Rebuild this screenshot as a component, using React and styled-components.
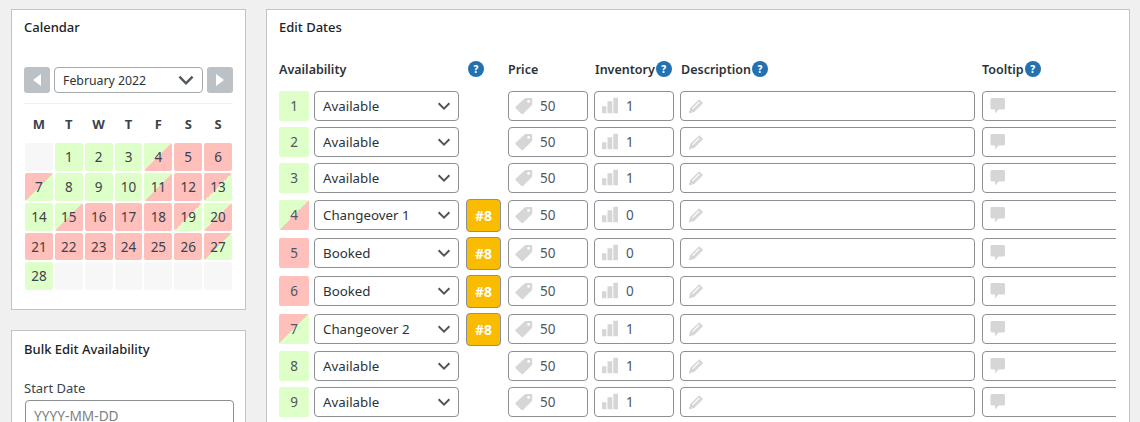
import React from 'react';
import styled, { createGlobalStyle, css } from 'styled-components';

const GREEN = '#dfffc9';
const RED = '#ffc0bc';
const FONT = '"Noto Sans", "Open Sans", sans-serif';

const fills = {
  free: css`background: ${GREEN};`,
  booked: css`background: ${RED};`,
  in: css`background: linear-gradient(to bottom right, ${GREEN} 50%, ${RED} 50%);`,
  out: css`background: linear-gradient(to bottom right, ${RED} 50%, ${GREEN} 50%);`,
  empty: css`background: #f7f7f7;`,
};

const chevron = (size) =>
  `url("data:image/svg+xml,%3Csvg xmlns='http://www.w3.org/2000/svg' viewBox='0 0 20 20' width='${size}' height='${size}'%3E%3Cpath d='M4 7l6 6 6-6' fill='none' stroke='%2350575e' stroke-width='2.2'/%3E%3C/svg%3E")`;

const GlobalStyle = createGlobalStyle`
  html, body {
    margin: 0;
    height: 422px;
    overflow: hidden;
    background: #f0f0f1;
    font-family: ${FONT};
    color: #2c3338;
  }
`;

const Page = styled.div`
  display: grid;
  grid-template-columns: 235px 864px;
  column-gap: 20px;
  padding: 9px 0 0 11px;
  height: 413px;
  overflow: hidden;
`;

const Sidebar = styled.div`
  display: flex;
  flex-direction: column;
  gap: 20px;
`;

const Card = styled.section`
  background: #fff;
  border: 1px solid #c3c4c7;
  box-sizing: border-box;
  padding: ${(p) => p.$padding || '0 12px'};
  height: ${(p) => p.$height || 'auto'};
`;

const CardTitle = styled.h2`
  margin: 0;
  font-size: 13px;
  line-height: 18px;
  font-weight: 500;
  color: #1d2327;
`;

const MonthBar = styled.div`
  display: grid;
  grid-template-columns: 26px 149px 26px;
  column-gap: 4px;
  margin-top: 31px;
  padding-bottom: 10px;
  border-bottom: 1px solid #f0f0f1;
`;

const NavButton = styled.button`
  height: 26px;
  padding: 0;
  border: 0;
  border-radius: 3px;
  background: #bcc1c5;
  display: flex;
  align-items: center;
  justify-content: center;
`;

const NavArrow = styled.span`
  width: 0;
  height: 0;
  border-top: 6px solid transparent;
  border-bottom: 6px solid transparent;
  ${(p) => (p.$left ? 'border-right: 8px solid #fff;' : 'border-left: 8px solid #fff;')}
`;

const Select = styled.select`
  appearance: none;
  box-sizing: border-box;
  width: ${(p) => p.$width || '100%'};
  height: ${(p) => p.$height || '30px'};
  padding: 0 24px 0 8px;
  border: 1px solid ${(p) => p.$border || '#8c8f94'};
  border-radius: 4px;
  background: #fff ${(p) => chevron(p.$chevron || 18)} no-repeat right 5px center;
  font-family: ${FONT};
  font-size: ${(p) => p.$size || '13.3px'};
  color: #2c3338;
  outline: none;
`;

const DayHeads = styled.div`
  display: grid;
  grid-template-columns: repeat(7, 27.86px);
  column-gap: 2px;
  margin: 10px 0 0 1px;
  height: 28px;
`;

const DayHead = styled.div`
  text-align: center;
  font-size: 13px;
  line-height: 20px;
  font-weight: 700;
  color: #3c434a;
`;

const DayGrid = styled.div`
  display: grid;
  grid-template-columns: repeat(7, 27.86px);
  grid-auto-rows: 27.86px;
  gap: 2px;
  margin: 1px 0 0 1px;
`;

const Day = styled.div`
  border-radius: 2px;
  display: flex;
  align-items: center;
  justify-content: center;
  font-size: 13.5px;
  color: #3c434a;
  ${(p) => fills[p.$kind]}
`;

const FieldLabel = styled.div`
  margin-top: 21px;
  font-size: 13px;
  line-height: 18px;
  color: #3c434a;
`;

const DateInput = styled.div`
  box-sizing: border-box;
  width: 209px;
  height: 30px;
  margin: 3px 0 0 1px;
  padding: 0 8px;
  border: 1px solid #8c8f94;
  border-radius: 4px;
  font-size: 13.7px;
  line-height: 29px;
  color: #7b8086;
`;

const DatesTable = styled.div`
  width: 837px;
  margin-top: 22px;
  overflow: hidden;
`;

const columns = '35px 152px 42px 86px 86px 302px 200px';

const HeadRow = styled.div`
  display: grid;
  grid-template-columns: ${columns};
  height: 22px;
  margin-bottom: 8px;
  width: 903px;
`;

const HeadCell = styled.div`
  display: flex;
  align-items: center;
  gap: 1px;
  font-size: 12.5px;
  font-weight: 600;
  color: #2c3338;
  white-space: nowrap;
  ${(p) => p.$nudge && 'padding-left: 1px;'}
`;

const WideHeadCell = styled(HeadCell)`
  grid-column: 1 / span 3;
  justify-content: space-between;
  padding-right: 24px;
`;

const Help = styled.span`
  flex: none;
  width: 16px;
  height: 16px;
  border-radius: 50%;
  background: #2271b1;
  color: #fff;
  font-size: 10px;
  line-height: 16px;
  font-weight: 800;
  text-align: center;
`;

const Row = styled.div`
  display: grid;
  grid-template-columns: ${columns};
  align-items: center;
  width: 903px;
  height: ${(p) => (p.$tall ? '38px' : '36px')};
`;

const DayNumber = styled.div`
  width: 30px;
  height: 30px;
  border-radius: 2px;
  display: flex;
  align-items: center;
  justify-content: center;
  font-size: 13.5px;
  color: #50575e;
  ${(p) => fills[p.$kind]}
`;

const SeasonButton = styled.div`
  box-sizing: border-box;
  width: 35px;
  height: 33px;
  border: 1px solid #8c8f94;
  border-radius: 4px;
  background: #fabc00;
  color: #fff;
  font-size: 14px;
  font-weight: 700;
  line-height: 31px;
  text-align: center;
`;

const Field = styled.div`
  box-sizing: border-box;
  width: ${(p) => p.$width || '100%'};
  height: 30px;
  display: flex;
  align-items: center;
  gap: 7px;
  padding-left: 6px;
  border: 1px solid #8c8f94;
  border-radius: 4px;
  background: #fff;
  font-size: 13.5px;
  color: #50575e;
`;

const IconSvg = styled.svg`
  flex: none;
  width: 18px;
  height: 18px;
  fill: #d6d6d6;
`;

const TagIcon = () => (
  <IconSvg viewBox="0 0 18 18">
    <path d="M.6 9.800 9.300 1.700C9.700 1.300 10.200 1 10.800 1h5.400c.6 0 1 .4 1 1v5c0 .6-.2 1.100-.6 1.500L8 17c-.4.4-1 .4-1.400 0L.6 11.200c-.4-.4-.4-1 0-1.400zM13.600 3a1.400 1.400 0 1 0 0 2.800 1.400 1.400 0 0 0 0-2.800z" fillRule="evenodd" />
  </IconSvg>
);

const BarsIcon = () => (
  <IconSvg viewBox="0 0 18 18">
    <path d="M1 9.300h4.400v7H1zM6.500 4.300h4.800v12H6.500zM12.300.7H17v15.600h-4.700z" />
  </IconSvg>
);

const PencilIcon = () => (
  <IconSvg viewBox="0 0 18 18">
    <path d="M12.200 2.300 16.200 6 7.200 15 1.800 16.400 3.200 11zM11.800 4.600 5 11.400l.8.800 6.800-6.800z" fillRule="evenodd" />
  </IconSvg>
);

const BubbleIcon = () => (
  <IconSvg viewBox="0 0 18 18">
    <path d="M3 1h11.500c.8 0 1.500.7 1.500 1.500v8.500c0 .8-.7 1.500-1.500 1.500H9.500L6 16.500v-4H3c-.8 0-1.500-.7-1.500-1.500V2.500C1.500 1.700 2.200 1 3 1z" />
  </IconSvg>
);

const weekdays = ['M', 'T', 'W', 'T', 'F', 'S', 'S'];

const month = [
  ['', 'empty'], ['1', 'free'], ['2', 'free'], ['3', 'free'], ['4', 'in'], ['5', 'booked'], ['6', 'booked'],
  ['7', 'out'], ['8', 'free'], ['9', 'free'], ['10', 'free'], ['11', 'in'], ['12', 'booked'], ['13', 'out'],
  ['14', 'free'], ['15', 'in'], ['16', 'booked'], ['17', 'booked'], ['18', 'booked'], ['19', 'out'], ['20', 'in'],
  ['21', 'booked'], ['22', 'booked'], ['23', 'booked'], ['24', 'booked'], ['25', 'booked'], ['26', 'booked'], ['27', 'out'],
  ['28', 'free'], ['', 'empty'], ['', 'empty'], ['', 'empty'], ['', 'empty'], ['', 'empty'], ['', 'empty'],
];

const rows = [
  { day: 1, kind: 'free', status: 'Available', stock: 1 },
  { day: 2, kind: 'free', status: 'Available', stock: 1 },
  { day: 3, kind: 'free', status: 'Available', stock: 1 },
  { day: 4, kind: 'in', status: 'Changeover 1', stock: 0, booking: '#8' },
  { day: 5, kind: 'booked', status: 'Booked', stock: 0, booking: '#8' },
  { day: 6, kind: 'booked', status: 'Booked', stock: 0, booking: '#8' },
  { day: 7, kind: 'out', status: 'Changeover 2', stock: 1, booking: '#8' },
  { day: 8, kind: 'free', status: 'Available', stock: 1 },
  { day: 9, kind: 'free', status: 'Available', stock: 1 },
];

const App = () => (
  <>
    <GlobalStyle />
    <Page>
      <Sidebar>
        <Card $padding="8px 12px 0" $height="301px">
          <CardTitle>Calendar</CardTitle>
          <MonthBar>
            <NavButton aria-label="Previous month"><NavArrow $left /></NavButton>
            <Select $height="26px" $chevron={22} $size="12.3px" $border="#a7aaad" defaultValue="February 2022">
              <option>February 2022</option>
            </Select>
            <NavButton aria-label="Next month"><NavArrow /></NavButton>
          </MonthBar>
          <DayHeads>
            {weekdays.map((d, i) => <DayHead key={i}>{d}</DayHead>)}
          </DayHeads>
          <DayGrid>
            {month.map(([label, kind], i) => <Day key={i} $kind={kind}>{label}</Day>)}
          </DayGrid>
        </Card>
        <Card $padding="9px 12px 0" $height="120px">
          <CardTitle>Bulk Edit Availability</CardTitle>
          <FieldLabel>Start Date</FieldLabel>
          <DateInput>YYYY-MM-DD</DateInput>
        </Card>
      </Sidebar>
      <Card $padding="8px 12px 0" $height="440px">
        <CardTitle>Edit Dates</CardTitle>
        <DatesTable>
          <HeadRow>
            <WideHeadCell>
              Availability
              <Help>?</Help>
            </WideHeadCell>
            <HeadCell>Price</HeadCell>
            <HeadCell $nudge>Inventory<Help>?</Help></HeadCell>
            <HeadCell $nudge>Description<Help>?</Help></HeadCell>
            <HeadCell>Tooltip<Help>?</Help></HeadCell>
          </HeadRow>
          {rows.map((r) => (
            <Row key={r.day} $tall={!!r.booking}>
              <DayNumber $kind={r.kind}>{r.day}</DayNumber>
              <Select $width="145px" defaultValue={r.status}>
                <option>{r.status}</option>
              </Select>
              {r.booking ? <SeasonButton>{r.booking}</SeasonButton> : <span />}
              <Field $width="80px"><TagIcon /><span>50</span></Field>
              <Field $width="80px"><BarsIcon /><span>{r.stock}</span></Field>
              <Field $width="295px"><PencilIcon /></Field>
              <Field><BubbleIcon /></Field>
            </Row>
          ))}
        </DatesTable>
      </Card>
    </Page>
  </>
);

export default App;
